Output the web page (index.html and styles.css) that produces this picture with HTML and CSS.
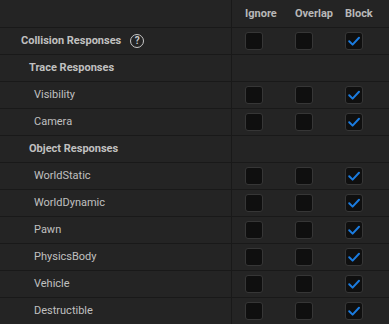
FILE: index.html
```html
<!DOCTYPE html>
<html lang="en">
  <head>
    <meta charset="UTF-8" />
    <title>Collision Responses</title>
    <link rel="stylesheet" href="styles.css">
  </head>
  <body>
    <div class="panel">
      <div class="row header">
        <div class="name"></div>
        <div class="cells">
          <div class="cell">Ignore</div>
          <div class="cell">Overlap</div>
          <div class="cell">Block</div>
        </div>
      </div>

      <div class="row">
        <div class="name bold lvl0">Collision Responses <span class="help">?</span></div>
        <div class="cells">
          <div class="cell"><span class="box"></span></div>
          <div class="cell"><span class="box"></span></div>
          <div class="cell"><span class="box checked"></span></div>
        </div>
      </div>

      <div class="row">
        <div class="name bold lvl1">Trace Responses</div>
        <div class="cells"></div>
      </div>
      <div class="row">
        <div class="name lvl2">Visibility</div>
        <div class="cells">
          <div class="cell"><span class="box"></span></div>
          <div class="cell"><span class="box"></span></div>
          <div class="cell"><span class="box checked"></span></div>
        </div>
      </div>
      <div class="row">
        <div class="name lvl2">Camera</div>
        <div class="cells">
          <div class="cell"><span class="box"></span></div>
          <div class="cell"><span class="box"></span></div>
          <div class="cell"><span class="box checked"></span></div>
        </div>
      </div>

      <div class="row">
        <div class="name bold lvl1">Object Responses</div>
        <div class="cells"></div>
      </div>
      <div class="row">
        <div class="name lvl2">WorldStatic</div>
        <div class="cells">
          <div class="cell"><span class="box"></span></div>
          <div class="cell"><span class="box"></span></div>
          <div class="cell"><span class="box checked"></span></div>
        </div>
      </div>
      <div class="row">
        <div class="name lvl2">WorldDynamic</div>
        <div class="cells">
          <div class="cell"><span class="box"></span></div>
          <div class="cell"><span class="box"></span></div>
          <div class="cell"><span class="box checked"></span></div>
        </div>
      </div>
      <div class="row">
        <div class="name lvl2">Pawn</div>
        <div class="cells">
          <div class="cell"><span class="box"></span></div>
          <div class="cell"><span class="box"></span></div>
          <div class="cell"><span class="box checked"></span></div>
        </div>
      </div>
      <div class="row">
        <div class="name lvl2">PhysicsBody</div>
        <div class="cells">
          <div class="cell"><span class="box"></span></div>
          <div class="cell"><span class="box"></span></div>
          <div class="cell"><span class="box checked"></span></div>
        </div>
      </div>
      <div class="row">
        <div class="name lvl2">Vehicle</div>
        <div class="cells">
          <div class="cell"><span class="box"></span></div>
          <div class="cell"><span class="box"></span></div>
          <div class="cell"><span class="box checked"></span></div>
        </div>
      </div>
      <div class="row">
        <div class="name lvl2">Destructible</div>
        <div class="cells">
          <div class="cell"><span class="box"></span></div>
          <div class="cell"><span class="box"></span></div>
          <div class="cell"><span class="box checked"></span></div>
        </div>
      </div>
    </div>

    <script>
      // checkmark svg in every ticked box
      const tick =
        '<svg width="16" height="16" viewBox="0 0 16 16"><path d="M3.2 8.3 L6.6 11.6 L13 4.8" fill="none" stroke="#1b7ce0" stroke-width="2" stroke-linecap="round" stroke-linejoin="round"/></svg>';
      document.querySelectorAll(".box.checked").forEach((b) => {
        b.innerHTML = tick;
      });
    </script>
  </body>
</html>
```

FILE: styles.css
```css
body {
  margin: 0;
  background: #242424;
  font-family: Roboto, "Noto Sans", sans-serif;
  font-size: 11px;
  color: #c0c0c0;
}
.panel {
  width: 389px;
  overflow: hidden;
}
.row {
  display: flex;
  height: 26px;
  border-top: 1px solid #191919;
}
.row.header {
  height: 27px;
  border-top: none;
}
.name {
  flex: none;
  width: 232px;
  border-right: 1px solid #191919;
  display: flex;
  align-items: center;
  white-space: nowrap;
  padding-bottom: 1px;
  box-sizing: border-box;
}
.bold {
  font-weight: bold;
}
.lvl0 {
  padding-left: 21px;
}
.lvl1 {
  padding-left: 29px;
}
.lvl2 {
  padding-left: 34px;
}
.cells {
  flex: 1;
  display: flex;
  padding-left: 13px;
}
.cell {
  flex: none;
  width: 50px;
  display: flex;
  align-items: center;
}
.header .cell {
  font-weight: bold;
  color: #b8b8b8;
}
.box {
  width: 16px;
  height: 16px;
  border: 1px solid #363636;
  border-radius: 3px;
  background: #0f0f0f;
  display: flex;
  margin-bottom: 1px;
}
.help {
  width: 12px;
  height: 12px;
  margin-left: 9px;
  border: 1.5px solid #c8c8c8;
  border-radius: 50%;
  display: inline-flex;
  align-items: center;
  justify-content: center;
  font-size: 10px;
  font-weight: bold;
  color: #c8c8c8;
}
```
